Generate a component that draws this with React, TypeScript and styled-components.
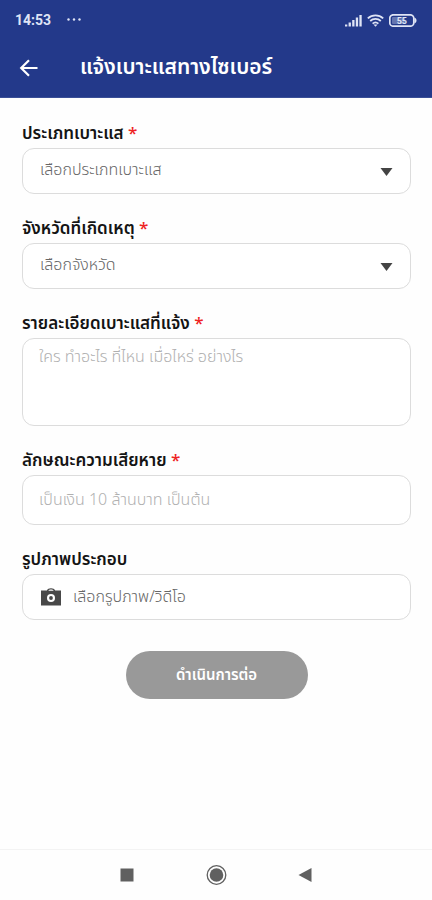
import React from 'react';
import styled, { createGlobalStyle } from 'styled-components';

const thai = '"Noto Sans Thai", "Noto Sans", sans-serif';
const line = '#dcdcdc';

const GlobalStyle = createGlobalStyle`
  *, *::before, *::after { box-sizing: border-box; }
  body { margin: 0; background: #fefefe; font-family: ${thai}; }
  button, input, select, textarea { font: inherit; color: inherit; }
`;

const Screen = styled.div`
  display: flex;
  flex-direction: column;
  min-height: 100vh;
`;

const Header = styled.header`
  background: #23398a;
  color: #fff;
  border-bottom: 1px solid #3a4f97;
`;

const StatusBar = styled.div`
  display: flex;
  align-items: center;
  justify-content: space-between;
  height: 40px;
  padding: 0 15px;
  color: #dfe4f5;
  font: 700 14px/20px Roboto, sans-serif;
`;

const StatusGroup = styled.div<{ $gap: number }>`
  display: flex;
  align-items: center;
  gap: ${({ $gap }) => $gap}px;
`;

const TitleBar = styled.div`
  display: flex;
  align-items: center;
  gap: 41px;
  height: 57px;
  padding: 0 19px 2px;
`;

const BackButton = styled.button`
  display: flex;
  padding: 0;
  border: 0;
  background: none;
  cursor: pointer;
`;

const Title = styled.h1`
  margin: 0;
  font-size: 21px;
  font-weight: 600;
  line-height: 32px;
`;

const Form = styled.form`
  display: flex;
  flex-direction: column;
  flex: 1;
  gap: 21px;
  padding: 22px 21px 24px 22px;
`;

const Field = styled.div`
  display: flex;
  flex-direction: column;
`;

const Label = styled.label`
  color: #141414;
  font-size: 17px;
  font-weight: 600;
  line-height: 28px;
`;

const Required = styled.span`
  color: #ee2222;
  font-weight: 500;
`;

const SelectBox = styled.div`
  display: grid;
  align-items: center;
  > * { grid-area: 1 / 1; }
  > svg { justify-self: end; margin: 2px 18px 0 0; pointer-events: none; }
`;

const Select = styled.select`
  appearance: none;
  width: 100%;
  height: 46px;
  padding: 0 44px 2px 17px;
  border: 1px solid ${line};
  border-radius: 12px;
  background: #fff;
  color: #666;
  font-size: 16px;
  font-weight: 300;
`;

const TextArea = styled.textarea`
  display: block;
  width: 100%;
  height: 88px;
  padding: 6px 16px;
  border: 1px solid ${line};
  border-radius: 12px;
  background: #fff;
  font-size: 16px;
  font-weight: 300;
  line-height: 24px;
  resize: none;
  &::placeholder { color: #b0b0b0; }
`;

const TextInput = styled.input`
  width: 100%;
  height: 50px;
  padding: 0 16px;
  border: 1px solid ${line};
  border-radius: 12px;
  background: #fff;
  font-size: 16px;
  font-weight: 300;
  &::placeholder { color: #b0b0b0; }
`;

const FileInput = styled.input`
  position: absolute;
  width: 1px;
  height: 1px;
  opacity: 0;
`;

const FilePicker = styled.label`
  display: flex;
  align-items: center;
  gap: 12px;
  height: 46px;
  padding: 0 18px;
  border: 1px solid ${line};
  border-radius: 12px;
  background: #fff;
  color: #666;
  font-size: 16px;
  font-weight: 300;
  line-height: 24px;
  cursor: pointer;
`;

const SubmitButton = styled.button`
  align-self: center;
  min-width: 182px;
  height: 48px;
  margin-top: 10px;
  padding: 0 32px;
  border: 0;
  border-radius: 24px;
  background: #999;
  color: #fff;
  font-size: 15px;
  font-weight: 600;
  cursor: pointer;
`;

const NavBar = styled.nav`
  display: flex;
  align-items: center;
  justify-content: center;
  gap: 68px;
  height: 51px;
  border-top: 1px solid #f3f3f3;
`;

const NavButton = styled.button`
  display: flex;
  padding: 0;
  border: 0;
  background: none;
  cursor: pointer;
`;

const Caret = () => (
  <svg width="13" height="8" viewBox="0 0 13 8" aria-hidden="true">
    <path d="M0.5 0h12L6.5 8z" fill="#444" />
  </svg>
);

interface SelectFieldProps {
  id: string;
  label: string;
  prompt: string;
}

const SelectField = ({ id, label, prompt }: SelectFieldProps) => (
  <Field>
    <Label htmlFor={id}>{label} <Required>*</Required></Label>
    <SelectBox>
      <Select id={id} defaultValue="" required>
        <option value="">{prompt}</option>
      </Select>
      <Caret />
    </SelectBox>
  </Field>
);

const Signal = () => (
  <svg width="17" height="13" viewBox="0 0 17 13" fill="currentColor" aria-hidden="true">
    <rect x="0" y="10.5" width="2.3" height="2" />
    <rect x="3.6" y="8.5" width="2.3" height="4" />
    <rect x="7.2" y="6" width="2.3" height="6.5" />
    <rect x="10.8" y="3.5" width="2.3" height="9" />
    <rect x="14.4" y="1" width="2.3" height="11.5" />
  </svg>
);

const Wifi = () => (
  <svg width="17" height="13" viewBox="0 0 17 13" fill="none" stroke="currentColor" strokeWidth="1.8" aria-hidden="true">
    <path d="M0.8 4.3c4.4-4 11-4 15.4 0M3.2 7c3-2.8 7.6-2.8 10.6 0M5.6 9.6c1.7-1.5 4.1-1.5 5.8 0" />
    <path d="M6.5 10.5h4L8.5 12.8z" fill="currentColor" stroke="none" />
  </svg>
);

const Battery = () => (
  <svg width="28" height="13" viewBox="0 0 28 13" aria-hidden="true">
    <rect x="0.8" y="0.8" width="24" height="11.4" rx="3.5" fill="none" stroke="currentColor" strokeWidth="1.7" />
    <rect x="3" y="3" width="13" height="7" rx="1" fill="currentColor" opacity="0.35" />
    <path d="M25.4 3.500v6c2.800-0.700 2.800-5.300 0-6z" fill="currentColor" />
    <text x="12.8" y="9.8" textAnchor="middle" fontFamily="Roboto, sans-serif" fontSize="9" fontWeight="700" fill="currentColor">55</text>
  </svg>
);

export default function App() {
  return (
    <Screen>
      <GlobalStyle />
      <Header>
        <StatusBar>
          <StatusGroup $gap={16}>
            <span>14:53</span>
            <svg width="14" height="5" viewBox="0 0 14 5" fill="currentColor" aria-hidden="true">
              <circle cx="1.5" cy="1.5" r="1.2" />
              <circle cx="7" cy="1.5" r="1.2" />
              <circle cx="12.5" cy="1.5" r="1.2" />
            </svg>
          </StatusGroup>
          <StatusGroup $gap={5}>
            <Signal />
            <Wifi />
            <Battery />
          </StatusGroup>
        </StatusBar>
        <TitleBar>
          <BackButton type="button" aria-label="ย้อนกลับ">
            <svg width="20" height="20" viewBox="0 0 20 20" fill="none" stroke="#fff" strokeWidth="2.2" aria-hidden="true">
              <path d="M18.5 10H3M10 2.200L2.200 10l7.800 7.800" />
            </svg>
          </BackButton>
          <Title>แจ้งเบาะแสทางไซเบอร์</Title>
        </TitleBar>
      </Header>

      <Form onSubmit={(e) => e.preventDefault()}>
        <SelectField id="clue-type" label="ประเภทเบาะแส" prompt="เลือกประเภทเบาะแส" />
        <SelectField id="province" label="จังหวัดที่เกิดเหตุ" prompt="เลือกจังหวัด" />
        <Field>
          <Label htmlFor="details">รายละเอียดเบาะแสที่แจ้ง <Required>*</Required></Label>
          <TextArea id="details" placeholder="ใคร ทำอะไร ที่ไหน เมื่อไหร่ อย่างไร" required />
        </Field>
        <Field>
          <Label htmlFor="damage">ลักษณะความเสียหาย <Required>*</Required></Label>
          <TextInput id="damage" type="text" placeholder="เป็นเงิน 10 ล้านบาท เป็นต้น" required />
        </Field>
        <Field>
          <Label htmlFor="media">รูปภาพประกอบ</Label>
          <FilePicker>
            <FileInput id="media" type="file" accept="image/*,video/*" />
            <svg width="20" height="18" viewBox="0 0 20 18" aria-hidden="true">
              <path fillRule="evenodd" fill="#484848" d="M0 2.500h5.800C6.500 1 8 0.200 10 0.200S13.500 1 14.200 2.500H20V17.500H0zM7.300 2.800h5.400c-.5-.9-1.400-1.400-2.700-1.400s-2.200.5-2.700 1.400z" />
              <circle cx="10" cy="10" r="4" fill="#fff" />
              <circle cx="10" cy="10" r="1.9" fill="#484848" />
            </svg>
            <span>เลือกรูปภาพ/วิดีโอ</span>
          </FilePicker>
        </Field>
        <SubmitButton type="submit">ดำเนินการต่อ</SubmitButton>
      </Form>

      <NavBar aria-label="ระบบ">
        <NavButton type="button" aria-label="แอปล่าสุด">
          <svg width="20" height="20" viewBox="0 0 20 20" aria-hidden="true">
            <rect x="3.5" y="3.5" width="13" height="13" fill="#606060" />
          </svg>
        </NavButton>
        <NavButton type="button" aria-label="หน้าหลัก">
          <svg width="22" height="22" viewBox="0 0 22 22" aria-hidden="true">
            <circle cx="11.5" cy="11" r="9.3" fill="none" stroke="#606060" strokeWidth="1.3" />
            <circle cx="11.5" cy="11" r="6.8" fill="#606060" />
          </svg>
        </NavButton>
        <NavButton type="button" aria-label="ย้อนกลับ">
          <svg width="20" height="20" viewBox="0 0 20 20" aria-hidden="true">
            <path d="M16.500 3v14L3.500 10z" fill="#606060" />
          </svg>
        </NavButton>
      </NavBar>
    </Screen>
  );
}
